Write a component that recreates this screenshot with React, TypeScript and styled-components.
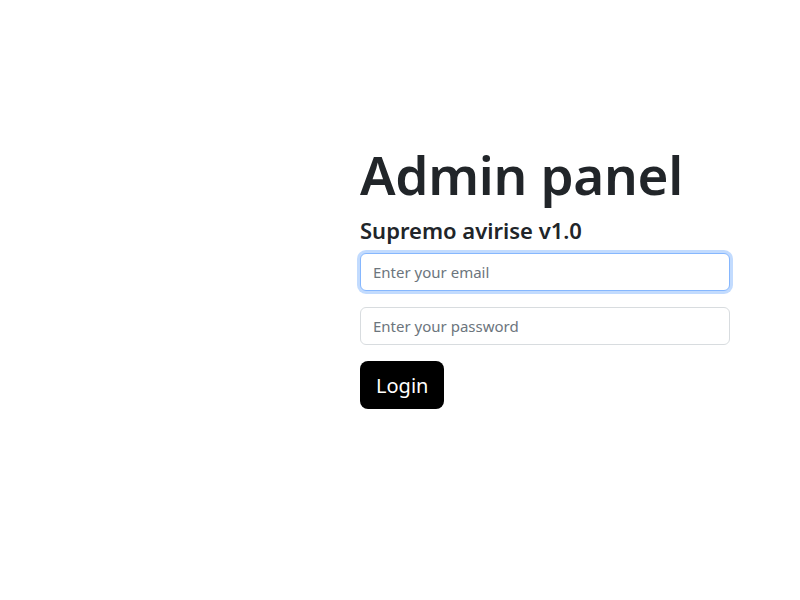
import styled, { createGlobalStyle } from "styled-components";

const GlobalStyle = createGlobalStyle`
  body {
    margin: 0;
    background: #fff;
    color: #212529;
    font-family: "Noto Sans", "Open Sans", sans-serif;
  }
  * {
    box-sizing: border-box;
  }
`;

const Page = styled.div`
  display: grid;
  grid-template-columns: 360px 370px;
  padding-top: 143px;
`;

const Panel = styled.div`
  grid-column: 2;
  display: flex;
  flex-direction: column;
`;

const Title = styled.h1`
  margin: 0 0 8px;
  font-size: 53px;
  font-weight: 600;
  line-height: 64px;
  letter-spacing: -0.3px;
`;

const Subtitle = styled.h4`
  margin: 0 0 8px;
  font-size: 22px;
  font-weight: 600;
  line-height: 30px;
`;

const Form = styled.form`
  display: flex;
  flex-direction: column;
  gap: 16px;
  align-items: flex-start;
`;

const Input = styled.input<{ focused?: boolean }>`
  width: 100%;
  height: 38px;
  padding: 6px 12px;
  font-family: inherit;
  font-size: 15px;
  color: #212529;
  border: 1px solid ${(p) => (p.focused ? "#86b7fe" : "#d8dcdf")};
  border-radius: 6px;
  outline: none;
  box-shadow: ${(p) =>
    p.focused ? "0 0 0 3px rgba(13, 110, 253, 0.25)" : "none"};
  &::placeholder {
    color: #6c757d;
  }
`;

const Button = styled.button`
  height: 48px;
  padding: 0 16px;
  background: #000;
  color: #fff;
  border: none;
  border-radius: 8px;
  font-family: inherit;
  font-size: 20px;
  cursor: pointer;
`;

function App() {
  return (
    <>
      <GlobalStyle />
      <Page>
        <Panel>
          <Title>Admin panel</Title>
          <Subtitle>Supremo avirise v1.0</Subtitle>
          <Form onSubmit={(e) => e.preventDefault()}>
            <Input focused type="email" placeholder="Enter your email" />
            <Input type="password" placeholder="Enter your password" />
            <Button>Login</Button>
          </Form>
        </Panel>
      </Page>
    </>
  );
}

export default App;
